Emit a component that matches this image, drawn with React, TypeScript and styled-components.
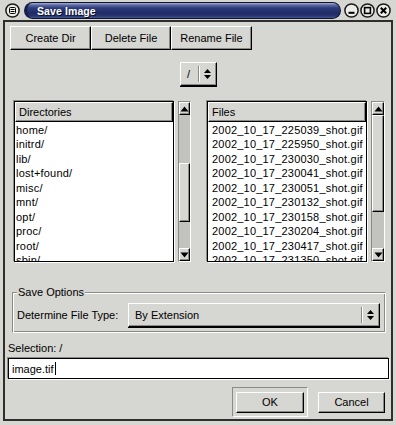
import styled, { createGlobalStyle, css } from 'styled-components'

const Bg = '#d6d6d2'
const Shade = '#8a8a86'
const TroughColor = '#c2c2be'

const GlobalStyle = createGlobalStyle`
  html, body {
    margin: 0;
    padding: 0;
    background: ${Bg};
  }

  body {
    font-family: 'Liberation Sans', Arial, sans-serif;
    font-size: 11px;
    color: #000;
  }

  * {
    box-sizing: border-box;
  }
`

const raised = css`
  background: ${Bg};
  border: 1px solid;
  border-color: #fff #000 #000 #fff;
  box-shadow: inset -1px -1px 0 ${Shade};
`

const dirs = ['home/', 'initrd/', 'lib/', 'lost+found/', 'misc/', 'mnt/', 'opt/', 'proc/', 'root/', 'sbin/']

const files = [
  '225039',
  '225950',
  '230030',
  '230041',
  '230051',
  '230132',
  '230158',
  '230204',
  '230417',
  '231350',
].map((stamp) => `2002_10_17_${stamp}_shot.gif`)

type Kind = 'menu' | 'min' | 'max' | 'close'

const RoundButton = ({ kind }: { kind: Kind }) => {
  return (
    <svg width="15" height="15" viewBox="0 0 15 15">
      <circle cx="7.5" cy="7.5" r="6.6" fill="#ecece8" stroke="#1a1a1a" strokeWidth="1.5" />
      {kind === 'menu' && (
        <g fill="none" stroke="#000" strokeWidth="1">
          <rect x="4.5" y="4.5" width="6" height="6" rx="1" />
          <line x1="5.5" y1="6.5" x2="9.5" y2="6.5" />
          <line x1="5.5" y1="8.5" x2="9.5" y2="8.5" />
        </g>
      )}
      {kind === 'min' && <line x1="4.5" y1="9.8" x2="10.5" y2="9.8" stroke="#000" strokeWidth="2" />}
      {kind === 'max' && <rect x="4.6" y="4.6" width="5.8" height="5.8" fill="none" stroke="#000" strokeWidth="1.6" />}
      {kind === 'close' && (
        <g stroke="#000" strokeWidth="2">
          <line x1="4.8" y1="4.8" x2="10.2" y2="10.2" />
          <line x1="10.2" y1="4.8" x2="4.8" y2="10.2" />
        </g>
      )}
    </svg>
  )
}

const UpDown = () => (
  <svg width="7" height="12" viewBox="0 0 7 12">
    <path d="M0 5 L3.5 1 L7 5 Z" fill="#000" />
    <path d="M0 7 L7 7 L3.5 11 Z" fill="#000" />
  </svg>
)

const Arrow = ({ down }: { down?: boolean }) => (
  <svg width="9" height="6" viewBox="0 0 9 6">
    <path d={down ? 'M0.5 0.5 L8.5 0.5 L4.5 5.5 Z' : 'M0.5 5.5 L4.5 0.5 L8.5 5.5 Z'} fill="#000" />
  </svg>
)

interface ScrollProps {
  thumbTop: number
  thumbHeight: number
}

const Scrollbar = ({ thumbTop, thumbHeight }: ScrollProps) => (
  <Track>
    <ScrollArrow>
      <Arrow />
    </ScrollArrow>
    <Trough>
      <Thumb style={{ marginTop: thumbTop, height: thumbHeight }} />
    </Trough>
    <ScrollArrow>
      <Arrow down />
    </ScrollArrow>
  </Track>
)

export default function App() {
  return (
    <>
      <GlobalStyle />
      <Window>
        <TitleBar>
          <RoundButton kind="menu" />
          <TitlePill>
            <TitleText>Save Image</TitleText>
          </TitlePill>
          <Controls>
            <RoundButton kind="min" />
            <RoundButton kind="max" />
            <RoundButton kind="close" />
          </Controls>
        </TitleBar>

        <Client>
          <ButtonRow>
            <Button $w={81}>Create Dir</Button>
            <Button $w={80}>Delete File</Button>
            <Button $w={81}>Rename File</Button>
          </ButtonRow>

          <PathRow>
            <OptionMenu $w={37}>
              <OptionLabel>/</OptionLabel>
              <Separator />
              <UpDown />
            </OptionMenu>
          </PathRow>

          <Panes>
            <Pane $scroll={13}>
              <List>
                <ListHeader>Directories</ListHeader>
                <Rows $indent={1}>
                  {dirs.map((dir) => (
                    <Row key={dir}>{dir}</Row>
                  ))}
                </Rows>
              </List>
              <Scrollbar thumbTop={48} thumbHeight={59} />
            </Pane>
            <Pane $scroll={14}>
              <List>
                <ListHeader>Files</ListHeader>
                <Rows $indent={4}>
                  {files.map((file) => (
                    <Row key={file}>{file}</Row>
                  ))}
                </Rows>
              </List>
              <Scrollbar thumbTop={0} thumbHeight={97} />
            </Pane>
          </Panes>

          <Frame>
            <Legend>Save Options</Legend>
            <OptionRow>
              <span>Determine File Type:</span>
              <OptionMenu $w={252}>
                <OptionLabel>By Extension</OptionLabel>
                <Separator />
                <UpDown />
              </OptionMenu>
            </OptionRow>
          </Frame>

          <SelectionLabel>Selection: /</SelectionLabel>
          <Entry>
            image.tif
            <Caret />
          </Entry>

          <Actions>
            <DefaultFrame>
              <Button $w={68} $h={21}>
                OK
              </Button>
            </DefaultFrame>
            <Button $w={67} $h={21}>
              Cancel
            </Button>
          </Actions>
        </Client>
      </Window>
    </>
  )
}

const Window = styled.div`
  width: 396px;
  height: 425px;
  display: flex;
  flex-direction: column;
  background: ${Bg};
  overflow: hidden;
`

const TitleBar = styled.div`
  height: 20px;
  display: flex;
  align-items: center;
  padding: 0 5px 0 5px;
  gap: 4px;
`

const TitlePill = styled.div`
  flex: 1;
  height: 17px;
  margin-top: 1px;
  display: flex;
  align-items: center;
  border: 1px solid #0e1430;
  border-left: 3px solid #151d48;
  border-radius: 9px;
  background: linear-gradient(
    180deg,
    #aab3d2 0px,
    #5e6ca4 2px,
    #2d3b79 5px,
    #1f2b66 10px,
    #283673 13px,
    #46558f 15px
  );
`

const TitleText = styled.span`
  padding-left: 10px;
  color: #fff;
  font-weight: bold;
  font-size: 10.5px;
  letter-spacing: 0.1px;
  text-shadow: 1px 1px 0 #0a0f2a;
`

const Controls = styled.div`
  display: flex;
  gap: 1px;
  margin-left: -1px;
`

const Client = styled.div`
  flex: 1;
  margin: 0 3px 4px 3px;
  border: 2px solid #2e2e2c;
  display: flex;
  flex-direction: column;
`

const ButtonRow = styled.div`
  display: flex;
  margin: 4px 0 0 5px;
`

const Button = styled.button<{ $w: number; $h?: number }>`
  ${raised};
  width: ${(p) => p.$w}px;
  height: ${(p) => p.$h ?? 24}px;
  padding: 0;
  font-family: inherit;
  font-size: 11px;
  color: #000;
`

const PathRow = styled.div`
  display: flex;
  justify-content: center;
  margin-top: 12px;
  padding-left: 1px;
`

const OptionMenu = styled.div<{ $w: number }>`
  ${raised};
  width: ${(p) => p.$w}px;
  height: 24px;
  display: flex;
  align-items: center;
  padding: 0 5px 0 6px;
  box-shadow: inset -1px -1px 0 ${Shade}, 0 1px 0 #000;
`

const OptionLabel = styled.span`
  flex: 1;
`

const Separator = styled.span`
  width: 2px;
  height: 16px;
  margin-right: 4px;
  border-left: 1px solid ${Shade};
  border-right: 1px solid #fff;
`

const Panes = styled.div`
  display: flex;
  gap: 16px;
  margin-top: 15px;
  padding: 0 6px 0 9px;
  height: 161px;
`

const Pane = styled.div<{ $scroll: number }>`
  display: grid;
  grid-template-columns: 160px ${(p) => p.$scroll}px;
  gap: 4px;
`

const List = styled.div`
  display: flex;
  flex-direction: column;
  background: #fff;
  border: 1px solid #000;
  box-shadow: -1px -1px 0 ${Shade}, 1px 1px 0 #fff;
  overflow: hidden;
`

const ListHeader = styled.div`
  ${raised};
  height: 20px;
  flex-shrink: 0;
  display: flex;
  align-items: center;
  padding-left: 3px;
`

const Rows = styled.div<{ $indent: number }>`
  flex: 1;
  overflow: hidden;
  padding-top: 1px;

  & > div {
    margin-left: ${(p) => p.$indent}px;
  }
`

const Row = styled.div`
  height: 14.45px;
  line-height: 14.45px;
  white-space: nowrap;
  letter-spacing: 0.2px;
`

const Track = styled.div`
  display: flex;
  flex-direction: column;
  background: ${TroughColor};
  border: 1px solid;
  border-color: ${Shade} #fff #fff ${Shade};
`

const ScrollArrow = styled.div`
  ${raised};
  height: 13px;
  flex-shrink: 0;
  display: flex;
  align-items: center;
  justify-content: center;
`

const Trough = styled.div`
  flex: 1;
  display: flex;
  flex-direction: column;
`

const Thumb = styled.div`
  ${raised};
  flex-shrink: 0;
`

const Frame = styled.div`
  display: flex;
  flex-direction: column;
  margin: 30px 5px 0 7px;
  padding: 0 5px 5px 4px;
  border: 1px solid;
  border-color: ${Shade} #fff #fff ${Shade};
  box-shadow: inset 1px 1px 0 #fff, inset -1px -1px 0 ${Shade};
`

const Legend = styled.div`
  align-self: flex-start;
  margin-top: -7px;
  padding: 0 1px;
  height: 13px;
  line-height: 13px;
  background: ${Bg};
`

const OptionRow = styled.div`
  display: flex;
  align-items: center;
  justify-content: space-between;
  margin-top: 4px;
`

const SelectionLabel = styled.div`
  margin: 9px 0 0 3px;
  height: 13px;
  line-height: 13px;
`

const Entry = styled.div`
  margin: 3px 2px 0 3px;
  height: 21px;
  display: flex;
  align-items: center;
  padding-left: 3px;
  background: #fff;
  border: 1px solid #000;
  box-shadow: -1px -1px 0 ${Shade}, 1px 1px 0 #fff;
`

const Caret = styled.span`
  width: 1px;
  height: 13px;
  margin-left: 1px;
  background: #000;
`

const Actions = styled.div`
  display: flex;
  align-items: center;
  justify-content: flex-end;
  gap: 10px;
  margin-top: 8px;
  padding-right: 6px;
`

const DefaultFrame = styled.div`
  width: 76px;
  height: 30px;
  display: flex;
  align-items: center;
  justify-content: center;
  border: 1px solid;
  border-color: ${Shade} #fff #fff ${Shade};
`
